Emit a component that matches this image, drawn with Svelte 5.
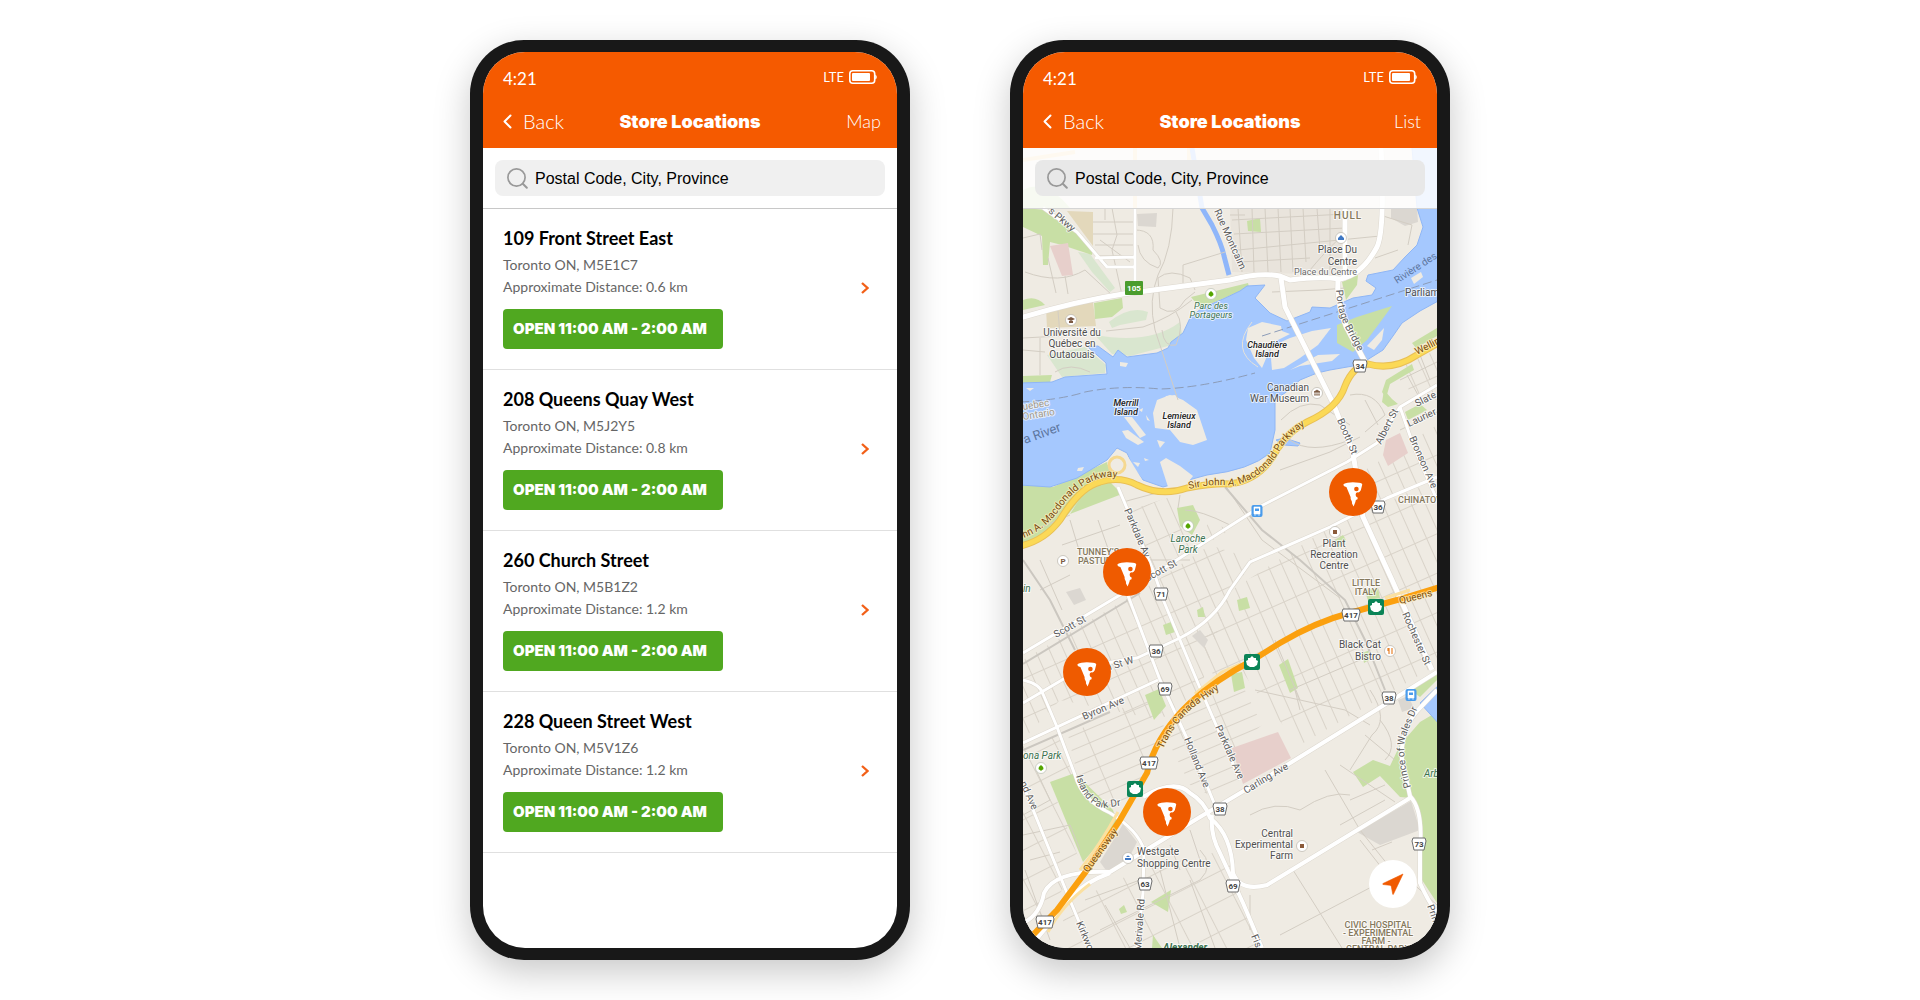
<script>
  const stores = [
    { name: '109 Front Street East', area: 'Toronto ON, M5E1C7', distance: '0.6 km' },
    { name: '208 Queens Quay West', area: 'Toronto ON, M5J2Y5', distance: '0.8 km' },
    { name: '260 Church Street', area: 'Toronto ON, M5B1Z2', distance: '1.2 km' },
    { name: '228 Queen Street West', area: 'Toronto ON, M5V1Z6', distance: '1.2 km' }
  ];
  const hours = 'OPEN 11:00 AM - 2:00 AM';

  // Map drawing units: the visible window is 414 x 800, starting at (1023, 148).
  const view = { x: 1023, y: 148, w: 414, h: 800 };
  const left = (x) => `${((x - view.x) / view.w) * 100}%`;
  const top = (y) => `${((y - view.y) / view.h) * 100}%`;

  const pins = [
    { x: 1353, y: 492, name: '109 Front Street East' },
    { x: 1127, y: 572, name: '208 Queens Quay West' },
    { x: 1087, y: 672, name: '260 Church Street' },
    { x: 1167, y: 812, name: '228 Queen Street West' }
  ];

  const greens = [
    'M1023 208L1047 210L1070 223L1093 250L1092 255L1062 245L1050 242L1048 265L1043 265L1042 236L1023 227Z',
    'M1023 300Q1036 295 1045 305L1023 310Z',
    'M1094 303L1122 298L1123 308L1112 317L1095 319Z',
    'M1023 376L1052 375L1050 382L1023 383Z',
    'M1191 297L1248 283L1250 291L1238 292L1222 299L1200 308Z',
    'M1342 282L1358 275L1357 285L1346 300Z',
    'M1247 221L1260 218L1261 232L1248 231Z',
    'M1023 485L1053 487L1107 462L1120 480L1085 493L1060 525L1023 546Z',
    'M1070 514L1084 492L1110 482L1122 494Z',
    'M1177 508L1193 505L1200 520L1192 535L1180 526Z',
    'M1384 390L1392 399L1398 404L1388 407L1382 402Z',
    'M1405 412L1420 404L1427 410L1408 420Z',
    'M1386 380L1412 364L1414 370L1390 384L1386 398L1382 392Z',
    'M1412 343L1437 328L1437 336L1416 348Z',
    'M1163 625L1171 622L1175 632L1166 635Z',
    'M1197 610L1203 607L1205 617L1198 617Z',
    'M1145 695L1159 689L1166 706L1154 720Z',
    'M1237 600L1247 597L1250 608L1239 611Z',
    'M1231 674L1242 672L1245 688L1234 692Z',
    'M1279 665L1288 659L1298 688L1290 693Z',
    'M1050 782L1075 773L1113 810L1117 823L1083 862Z',
    'M1151 902L1171 890L1168 912Z',
    'M1119 909L1124 905L1127 912L1121 914Z',
    'M1153 935L1162 948L1152 948Z',
    'M1335 540L1343 535L1346 540L1338 549Z',
    'M1362 653L1370 650L1369 660L1364 663Z',
    'M1365 590L1378 588L1380 598L1368 600Z',
    'M1410 690L1437 672L1437 680L1420 697Z',
    'M1353 772L1373 760L1390 766L1400 745L1420 722L1437 712L1437 903L1422 880L1421 815L1411 798L1400 797L1380 776L1363 787Z'
  ];
  const paleGreens = [
    'M1078 252L1090 254L1115 288L1110 292L1092 272Z',
    'M1109 322Q1130 305 1148 312L1146 320L1120 325L1112 328Z',
    'M1095 335Q1150 345 1180 322L1182 334L1168 346L1130 356L1112 354Z',
    'M1047 355L1085 347L1106 365L1105 373L1062 377Z'
  ];
  const pinks = [
    'M1050 246L1068 243L1073 275L1062 276Z',
    'M1383 455L1386 440L1400 433L1408 453L1388 466Z',
    'M1232 748L1278 732L1291 758L1243 784Z'
  ];
  const tans = [
    'M1046 308L1093 302L1096 326L1047 328Z',
    'M1067 211L1093 212L1093 246L1084 234Z'
  ];
  const greys = [
    'M1123 824L1137 842L1127 862L1108 873L1100 862Z',
    'M1357 832L1411 801L1420 830L1380 845Z',
    'M1137 214L1157 213L1156 227L1138 226Z',
    'M1391 208L1417 208L1418 222L1405 226L1391 218Z',
    'M1192 636L1200 630L1208 640L1204 648Z',
    'M1066 592L1080 588L1086 600L1074 605Z',
    'M1398 700L1408 696L1414 708L1402 712Z'
  ];
  const islands = [
    'M1153 413L1157 400L1170 395L1183 400L1197 410L1207 440L1193 445L1180 442L1170 430L1155 428Z',
    'M1160 462L1166 458L1180 466L1193 476L1186 485L1168 487Z',
    'M1248 328L1262 322L1281 326L1282 331L1290 334L1274 342L1270 349L1262 368L1254 358L1246 340Z',
    'M1270 347L1290 338L1312 331L1331 328L1318 345L1300 358L1284 368L1272 370Z',
    'M1290 370L1318 355L1340 354L1332 361L1300 366L1280 374Z',
    'M1367 346L1384 328L1382 340L1374 350Z',
    'M1411 278L1421 272L1423 277L1414 284Z',
    'M1124 417L1132 417L1146 435L1140 438Z',
    'M1122 431L1128 430L1144 442L1138 445L1126 438Z',
    'M1157 440L1165 442L1160 448Z',
    'M1120 362L1128 363L1126 367L1120 366Z',
    'M1166 396L1175 395L1179 399L1164 400Z',
    'M1078 468L1084 467L1082 471L1077 471Z',
    'M1026 388L1034 388L1030 391Z',
    'M1133 462L1140 463L1138 467Z',
    'M1139 410L1143 408L1142 412ZM1146 415L1150 421L1147 420ZM1144 458L1149 460L1145 461Z'
  ];
  const minor = [
    'M1093 222H1135M1093 234H1135M1095 245H1135M1100 256H1135M1112 208L1117 235L1112 250L1122 295M1105 208V220',
    'M1135 230Q1155 230 1153 250Q1165 262 1158 268Q1140 262 1138 245',
    'M1173 208Q1172 250 1158 275Q1148 300 1155 330L1178 400',
    'M1158 278Q1170 268 1190 278L1195 290M1158 278L1160 308Q1175 318 1185 300L1195 292M1183 283V265L1225 252',
    'M1106 331L1143 327Q1170 318 1192 300M1162 330Q1164 348 1176 345Q1185 325 1176 312',
    'M1025 272Q1060 285 1085 270L1113 296M1048 258L1056 293M1065 276L1068 294M1023 238L1040 234L1042 250M1100 240L1130 262',
    'M1023 338L1060 336M1058 311L1060 335M1023 350L1045 352M1040 338V375M1055 372Q1070 362 1090 372',
    'M1238 208L1242 272M1252 208L1254 272M1265 208L1268 272M1278 208L1281 272M1290 208L1293 272M1303 208L1306 262M1317 208L1320 250M1330 208V270',
    'M1232 220L1345 214M1234 234L1345 228M1238 250L1380 236M1240 262L1310 258M1310 270Q1335 240 1345 235',
    'M1380 215L1412 225L1408 245M1375 258L1398 250M1272 292L1320 290L1345 288M1230 215L1245 215',
    'M1280 470L1330 452L1360 437M1225 485L1262 540L1340 598M1281 420Q1300 400 1320 405L1350 425M1290 440Q1310 455 1350 440',
    'M1350 395Q1375 390 1385 415L1365 432M1365 400L1378 425M1400 430L1437 412M1400 380L1437 362M1420 355L1430 380M1407 375L1418 395',
    'M1070 515L1023 535M1123 502L1160 492M1145 560L1190 560M1180 495L1178 508M1185 510Q1200 510 1230 525',
    'M1070 520L1082 560M1040 560L1062 610M1098 520L1112 560M1062 545L1120 525M1040 590L1070 575',
    'M1255 690L1345 710L1370 725M1295 690L1300 710M1290 690L1360 660M1275 640L1300 700',
    'M1250 815Q1275 800 1300 810Q1330 790 1350 795M1293 870L1342 948M1250 895L1250 930M1280 935L1400 872L1437 905',
    'M1340 765L1395 802M1325 770L1360 830L1400 880M1350 800L1385 785M1340 825L1385 800M1380 720Q1400 745 1385 760',
    'M1370 690Q1390 720 1372 735L1350 770M1365 735L1395 760M1360 840L1385 872M1372 850L1392 842',
    'M1023 835L1070 825L1080 850M1030 860L1060 852M1085 900L1140 880M1100 930L1200 880Q1215 865 1200 850M1105 905L1130 948M1160 870L1180 948M1190 880L1215 948',
    'M1025 870L1050 940M1036 770L1050 800L1023 815M1190 830L1200 860M1170 845L1180 870'
  ];
  const white = [
    'M1020 318Q1077 301 1123 294L1230 280Q1260 272 1280 276L1290 280Q1320 276 1340 279Q1362 275 1377 247Q1385 230 1381 148',
    'M1281 278L1285 307L1303 343L1333 403L1353 453L1363 517L1392 580L1432 670',
    'M1338 278Q1336 300 1346 326L1365 362',
    'M1345 278V208'
  ];
  const whiteThin = [
    'M1043 208L1077 232L1107 267H1135M1095 258L1135 257M1135 208V290',
    'M1118 487L1153 570L1160 590',
    'M1023 653L1150 577L1263 505L1347 462L1377 443L1400 407L1437 385',
    'M1023 703L1067 677Q1090 664 1137 658L1180 638Q1215 620 1230 590L1250 562L1330 527L1387 498L1437 477',
    'M1023 743L1158 680M1400 407L1415 450L1437 500',
    'M1023 680Q1040 684 1043 694L1057 727L1075 775Q1082 800 1110 813Q1138 830 1144 850L1143 893L1137 950',
    'M1127 593L1160 680L1190 745L1217 810M1162 597L1200 688L1240 780',
    'M1023 785L1067 893L1090 948'
  ];
  const whiteWide = [
    'M1023 923Q1040 915 1044 893Q1055 870 1110 872L1200 817L1287 765L1389 702L1437 672',
    'M1036 940L1070 898Q1085 882 1110 873M1143 797Q1175 778 1190 793Q1205 802 1210 818Q1232 835 1233 873Q1240 892 1267 885L1410 798',
    'M1212 815Q1210 835 1220 853L1243 903L1262 948',
    'M1437 690L1418 710Q1400 730 1402 760L1410 796Q1423 810 1420 847V883Q1430 905 1437 912'
  ];
  const parkway =
    'M1020 546Q1044 541 1060 520Q1080 487 1100 482Q1120 476 1137 485Q1162 497 1187 488Q1215 483 1230 484Q1262 480 1278 448Q1290 430 1307 422Q1338 408 1345 386Q1353 366 1368 364Q1393 371 1417 355L1440 342';
  const highway =
    'M1030 938L1057 910L1087 870L1120 820L1147 773Q1156 735 1190 703Q1215 680 1253 660L1280 643Q1315 622 1353 612L1397 600L1440 587';

  // Point labels. a: anchor, r: rotation in degrees.
  const labels = [
    { x: 1072, y: 336, t: 'Université du', c: 'poi', a: 'middle' },
    { x: 1072, y: 347, t: 'Québec en', c: 'poi', a: 'middle' },
    { x: 1072, y: 358, t: 'Outaouais', c: 'poi', a: 'middle' },
    { x: 1348, y: 219, t: 'HULL', c: 'town', a: 'middle' },
    { x: 1357, y: 253, t: 'Place Du', c: 'poi', a: 'end' },
    { x: 1357, y: 265, t: 'Centre', c: 'poi', a: 'end' },
    { x: 1357, y: 275, t: 'Place du Centre', c: 'small', a: 'end' },
    { x: 1267, y: 348, t: 'Chaudière', c: 'isle', a: 'middle' },
    { x: 1267, y: 357, t: 'Island', c: 'isle', a: 'middle' },
    { x: 1126, y: 406, t: 'Merrill', c: 'isle', a: 'middle' },
    { x: 1126, y: 415, t: 'Island', c: 'isle', a: 'middle' },
    { x: 1179, y: 419, t: 'Lemieux', c: 'isle', a: 'middle' },
    { x: 1179, y: 428, t: 'Island', c: 'isle', a: 'middle' },
    { x: 1211, y: 309, t: 'Parc des', c: 'park small-park', a: 'middle' },
    { x: 1211, y: 318, t: 'Portageurs', c: 'park small-park', a: 'middle' },
    { x: 1309, y: 391, t: 'Canadian', c: 'poi', a: 'end' },
    { x: 1309, y: 402, t: 'War Museum', c: 'poi', a: 'end' },
    { x: 1397, y: 284, t: 'Rivière des', c: 'river', r: -33 },
    { x: 1405, y: 296, t: 'Parliam', c: 'poi' },
    { x: 1214, y: 211, t: 'Rue Montcalm', c: 'street', r: 66 },
    { x: 1048, y: 212, t: 's Pkwy', c: 'street', r: 40 },
    { x: 1417, y: 355, t: 'Wellin', c: 'route', r: -27 },
    { x: 1417, y: 407, t: 'Slate', c: 'street', r: -27 },
    { x: 1409, y: 427, t: 'Laurier', c: 'street', r: -25 },
    { x: 1381, y: 445, t: 'Albert St', c: 'street', r: -63 },
    { x: 1409, y: 438, t: 'Bronson Ave', c: 'street', r: 66 },
    { x: 1337, y: 420, t: 'Booth St', c: 'street', r: 67 },
    { x: 1023, y: 410, t: 'uebec', c: 'border', r: -9 },
    { x: 1023, y: 420, t: 'Ontario', c: 'border', r: -9 },
    { x: 1025, y: 444, t: 'a River', c: 'river big', r: -20 },
    { x: 1188, y: 542, t: 'Laroche', c: 'park', a: 'middle' },
    { x: 1188, y: 553, t: 'Park', c: 'park', a: 'middle' },
    { x: 1124, y: 510, t: 'Parkdale Av', c: 'street', r: 67 },
    { x: 1077, y: 555, t: 'TUNNEY’S', c: 'area' },
    { x: 1078, y: 564, t: 'PASTURE', c: 'area' },
    { x: 1023, y: 592, t: 'in', c: 'park' },
    { x: 1147, y: 582, t: 'Scott St', c: 'street', r: -29 },
    { x: 1056, y: 638, t: 'Scott St', c: 'street', r: -29 },
    { x: 1107, y: 671, t: 'n St W', c: 'street', r: -17 },
    { x: 1084, y: 720, t: 'Byron Ave', c: 'street', r: -23 },
    { x: 1023, y: 759, t: 'ona Park', c: 'park' },
    { x: 1184, y: 739, t: 'Holland Ave', c: 'street', r: 68 },
    { x: 1215, y: 727, t: 'Parkdale Ave', c: 'street', r: 66 },
    { x: 1400, y: 604, t: 'Queens', c: 'route', r: -14 },
    { x: 1366, y: 586, t: 'LITTLE', c: 'area', a: 'middle' },
    { x: 1366, y: 595, t: 'ITALY', c: 'area', a: 'middle' },
    { x: 1402, y: 614, t: 'Rochester St', c: 'street', r: 66 },
    { x: 1381, y: 648, t: 'Black Cat', c: 'poi', a: 'end' },
    { x: 1381, y: 660, t: 'Bistro', c: 'poi', a: 'end' },
    { x: 1398, y: 503, t: 'CHINATOWN', c: 'area' },
    { x: 1334, y: 547, t: 'Plant', c: 'poi', a: 'middle' },
    { x: 1334, y: 558, t: 'Recreation', c: 'poi', a: 'middle' },
    { x: 1334, y: 569, t: 'Centre', c: 'poi', a: 'middle' },
    { x: 1246, y: 794, t: 'Carling Ave', c: 'street', r: -31 },
    { x: 1293, y: 837, t: 'Central', c: 'poi', a: 'end' },
    { x: 1293, y: 848, t: 'Experimental', c: 'poi', a: 'end' },
    { x: 1293, y: 859, t: 'Farm', c: 'poi', a: 'end' },
    { x: 1137, y: 855, t: 'Westgate', c: 'poi' },
    { x: 1137, y: 867, t: 'Shopping Centre', c: 'poi' },
    { x: 1088, y: 873, t: 'Queensway', c: 'route', r: -54 },
    { x: 1020, y: 783, t: 'nd Ave', c: 'street', r: 66 },
    { x: 1076, y: 923, t: 'Kirkwo', c: 'street', r: 67 },
    { x: 1141, y: 951, t: 'Merivale Rd', c: 'street', r: -86 },
    { x: 1163, y: 951, t: 'Alexander', c: 'park strong' },
    { x: 1251, y: 936, t: 'Fis', c: 'street', r: 68 },
    { x: 1378, y: 928, t: 'CIVIC HOSPITAL', c: 'area', a: 'middle' },
    { x: 1378, y: 936, t: '- EXPERIMENTAL', c: 'area', a: 'middle' },
    { x: 1376, y: 944, t: 'FARM -', c: 'area', a: 'middle' },
    { x: 1378, y: 952, t: 'CENTRAL PARK', c: 'area', a: 'middle' },
    { x: 1424, y: 777, t: 'Arb', c: 'park' },
    { x: 1427, y: 906, t: 'Prin', c: 'street', r: 70 }
  ];

  const curved = [
    { id: 'pw-east', c: 'route', t: 'Sir John A. Macdonald Parkway', d: 'M1189 489Q1215 483 1233 486Q1264 478 1279 452Q1290 432 1312 422' },
    { id: 'pw-west', c: 'route', t: 'hn A. Macdonald Parkway', d: 'M1024 538Q1044 530 1058 512Q1075 487 1095 480Q1110 474 1125 480' },
    { id: 'portage', c: 'street', t: 'Portage Bridge', d: 'M1336 290Q1337 310 1345 327L1366 366' },
    { id: 'canada', c: 'route', t: 'Trans-Canada Hwy', d: 'M1163 749Q1175 722 1195 706L1236 678' },
    { id: 'island', c: 'street', t: 'Island Park Dr', d: 'M1076 776Q1084 805 1104 808L1130 804' },
    { id: 'wales', c: 'street', t: 'Prince of Wales Dr', d: 'M1411 787Q1402 760 1405 738L1421 700' }
  ];

  const shields = [
    { x: 1360, y: 366, t: '34' }, { x: 1378, y: 507, t: '36' }, { x: 1161, y: 594, t: '71' },
    { x: 1156, y: 651, t: '36' }, { x: 1165, y: 689, t: '69' }, { x: 1149, y: 763, t: '417' },
    { x: 1351, y: 615, t: '417' }, { x: 1389, y: 698, t: '38' }, { x: 1220, y: 809, t: '38' },
    { x: 1145, y: 884, t: '63' }, { x: 1233, y: 886, t: '69' }, { x: 1045, y: 922, t: '417' },
    { x: 1419, y: 844, t: '73' }
  ];
  const maples = [{ x: 1376, y: 607 }, { x: 1252, y: 662 }, { x: 1135, y: 789 }];
  const transit = [{ x: 1257, y: 511 }, { x: 1411, y: 695 }];
  const trees = [{ x: 1211, y: 294 }, { x: 1188, y: 526 }, { x: 1041, y: 768 }];
  const dots = [{ x: 1335, y: 532 }, { x: 1302, y: 846 }];
</script>

{#snippet header(action)}
  <header>
    <div class="status">
      <span class="clock">4:21</span>
      <span class="signal">
        LTE
        <svg width="28" height="14" viewBox="0 0 28 14" aria-label="Battery">
          <rect x="0.8" y="0.8" width="24.9" height="12.4" rx="3" fill="none" stroke="#fff" stroke-width="1.6" />
          <rect x="3" y="3" width="18" height="8" rx="1" fill="#fff" />
          <path d="M26.2 4.5Q28 5.5 27.8 7Q28 8.500 26.200 9.500Z" fill="#fff" />
        </svg>
      </span>
    </div>
    <nav>
      <button class="back" type="button">
        <svg width="9" height="15" viewBox="0 0 9 15" aria-hidden="true">
          <path d="M7.500 1.500L1.500 7.500L7.500 13.500" fill="none" stroke="#fff" stroke-width="2" stroke-linecap="round" stroke-linejoin="round" />
        </svg>
        Back
      </button>
      <h1>Store Locations</h1>
      <button class="action" type="button">{action}</button>
    </nav>
  </header>
{/snippet}

{#snippet search(id, extra)}
  <div class="search {extra}">
    <label for={id}>
      <svg width="21" height="21" viewBox="0 0 21 21" aria-label="Search">
        <circle cx="9.500" cy="9.500" r="8.600" fill="none" stroke="#999" stroke-width="1.700" />
        <path d="M15.800 15.800L19.800 19.800" stroke="#999" stroke-width="2" stroke-linecap="round" />
      </svg>
    </label>
    <input {id} type="text" placeholder="Postal Code, City, Province" />
  </div>
{/snippet}

<main>
  <section class="phone">
    <div class="screen">
      {@render header('Map')}
      {@render search('search-list', '')}
      <ul>
        {#each stores as store}
          <li>
            <div class="info">
              <h2>{store.name}</h2>
              <p>{store.area}</p>
              <p>Approximate Distance: {store.distance}</p>
              <span class="hours">{hours}</span>
            </div>
            <button class="more" type="button" aria-label="Open {store.name}">
              <svg width="8" height="12" viewBox="0 0 8 12" aria-hidden="true">
                <path d="M1 1L6.500 6L1 11" fill="none" stroke="#f26018" stroke-width="2.300" />
              </svg>
            </button>
          </li>
        {/each}
      </ul>
    </div>
  </section>

  <section class="phone">
    <div class="screen">
      {@render header('List')}
      <div class="map">
        <svg class="canvas" viewBox="{view.x} {view.y} {view.w} {view.h}" preserveAspectRatio="xMidYMin slice" aria-label="Map">
          <defs>
            <pattern id="blocks" width="13" height="36" patternUnits="userSpaceOnUse" patternTransform="translate(1023 560) rotate(-24)">
              <path d="M0 0H13M0 0V36" class="block" />
            </pattern>
            <pattern id="blocks-wide" width="44" height="13" patternUnits="userSpaceOnUse" patternTransform="translate(1023 700) rotate(-23)">
              <path d="M0 0H44M0 0V13" class="block" />
            </pattern>
            <pattern id="blocks-open" width="30" height="27" patternUnits="userSpaceOnUse" patternTransform="translate(1023 880) rotate(-27)">
              <path d="M0 0H30M0 0V27" class="block" />
            </pattern>
          </defs>

          <rect x={view.x} y={view.y} width={view.w} height={view.h} fill="#efebe3" />
          <path d="M1230 208H1345V275L1232 272Z" fill="#e9e4dc" />
          <path d="M1023 160L1075 152M1040 175H1090M1135 148V208M1189 148V160" stroke="#f8d79a" stroke-width="4" fill="none" />
          <path d="M1023 190Q1045 178 1070 208H1023Z" fill="#c8dfa5" />

          <path fill="url(#blocks)" d="M1023 660L1150 585L1210 545L1255 560L1232 590L1215 640L1200 690L1160 720L1060 700L1023 740Z" />
          <path fill="url(#blocks)" d="M1232 590L1330 527L1437 480V665L1300 745L1262 700L1240 668L1215 680L1200 640Z" />
          <path fill="url(#blocks)" d="M1130 510L1170 497L1178 512L1182 530L1195 538L1210 522L1230 530L1153 575ZM1365 470L1437 425V480L1375 505ZM1405 365L1437 350V400L1410 400Z" />
          <path fill="url(#blocks-wide)" d="M1068 735L1158 690L1165 735L1142 795L1110 808L1082 795ZM1165 735L1195 705L1240 680L1262 725L1232 750L1245 780L1215 798L1190 785Z" />
          <path fill="url(#blocks-open)" d="M1023 745L1060 735L1082 795L1050 782L1080 862L1040 925L1023 930ZM1065 905L1140 870L1225 850L1262 948H1060Z" />

          <g fill="#d9e6cf">{#each paleGreens as d}<path {d} />{/each}</g>
          <g fill="#e3d8bb">{#each tans as d}<path {d} />{/each}</g>
          <g fill="#c8dfa5">{#each greens as d}<path {d} />{/each}</g>
          <g fill="#e7cfcb">{#each pinks as d}<path {d} />{/each}</g>
          <g fill="#dbd7d1">{#each greys as d}<path {d} />{/each}</g>

          <path
            class="water"
            d="M1020 383L1052 382L1065 377L1107 374L1106 363L1088 347L1098 346L1113 357L1118 350L1127 357L1157 353L1168 348L1171 342L1183 333L1190 318L1202 308L1223 299L1240 291L1247 286L1265 285L1255 298L1270 313L1287 321L1310 312L1312 307L1330 308L1353 298L1372 295L1376 288L1366 281L1368 275L1393 270L1405 257L1417 245L1423 227L1417 208L1412 148H1440V300L1420 311L1402 323L1393 336L1383 350L1367 360L1353 366L1330 370L1317 373L1300 380L1285 393L1275 399V430L1270 453Q1250 470 1207 475L1163 487L1143 480L1133 467L1127 453L1117 448L1107 460L1077 478L1050 487L1020 485Z"
          />
          <path class="stream" d="M1192 148L1202 208L1212 225Q1222 245 1224 256L1229 275" />
          <path class="water" d="M1276 440L1284 438L1300 443L1298 446L1284 445ZM1420 703L1440 684V725Z" />
          <g class="island">{#each islands as d}<path {d} />{/each}</g>
          <path class="island" d="M1107 464L1117 449L1127 455L1143 481L1120 478Z" />
          <path fill="#c8dfa5" d="M1337 325L1357 317L1392 306L1384 317L1367 340L1353 352L1337 343Z" />
          <path d="M1252 322Q1230 350 1258 367" fill="none" stroke="#e5e2da" />
          <path class="frontier" d="M1020 402Q1060 400 1085 392Q1120 385 1160 389Q1200 388 1255 373M1262 336L1437 280" />

          <g class="minor">{#each minor as d}<path {d} />{/each}</g>
          <path class="rail" d="M1023 664L1140 593M1023 560L1050 600L1075 650M1023 750L1110 712M1225 487L1262 530L1300 560L1345 600L1365 640L1385 690" />

          <g class="case">{#each whiteThin as d}<path {d} stroke-width="4" />{/each}{#each white as d}<path {d} stroke-width="6" />{/each}{#each whiteWide as d}<path {d} stroke-width="5" />{/each}</g>
          <g class="road">{#each whiteThin as d}<path {d} stroke-width="3" />{/each}{#each white as d}<path {d} stroke-width="5" />{/each}{#each whiteWide as d}<path {d} stroke-width="4" />{/each}</g>

          <circle cx="1117" cy="465" r="8" fill="none" stroke="#f5d890" stroke-width="3" />
          <path d={parkway} fill="none" stroke="#e9c055" stroke-width="7" />
          <path d={parkway} fill="none" stroke="#fbd957" stroke-width="5" />
          <path d="M1048 932Q1062 905 1090 884M1080 870Q1100 845 1118 812M1195 694L1222 672L1240 664M1385 598L1410 590" fill="none" stroke="#fbe0a0" stroke-width="3" />
          <path d={highway} fill="none" stroke="#fba00f" stroke-width="6" />

          {#each curved as road}
            <path id={road.id} d={road.d} fill="none" />
            <text class={road.c}><textPath href="#{road.id}">{road.t}</textPath></text>
          {/each}
          {#each labels as l}
            <text class={l.c} text-anchor={l.a ?? 'start'} transform="translate({l.x} {l.y}) rotate({l.r ?? 0})">{l.t}</text>
          {/each}

          <rect x="1125" y="281" width="18" height="14" rx="1" fill="#4a9c2d" />
          <text class="shield-green" x="1134" y="291" text-anchor="middle">105</text>

          {#each shields as s}
            <g transform="translate({s.x} {s.y})">
              <path d={s.t.length > 2 ? 'M-8 -6H8L9 -3L7 6H-7L-9 -3Z' : 'M-6 -6H6L7 -3L5 6H-5L-7 -3Z'} fill="#fff" stroke="#6d6d6d" />
              <text class="shield" y="3" text-anchor="middle">{s.t}</text>
            </g>
          {/each}
          {#each maples as m}
            <g transform="translate({m.x} {m.y})">
              <rect x="-8" y="-8" width="16" height="16" rx="2" fill="#0b8457" />
              <path d="M0 -6L2 -4L4 -4L4 -2L6 -1L5 3L2 5H-2L-5 3L-6 -1L-4 -2L-4 -4L-2 -4Z" fill="#fff" />
            </g>
          {/each}
          {#each transit as b}
            <g transform="translate({b.x} {b.y})">
              <rect x="-5.500" y="-6" width="11" height="12" rx="2" fill="#4a9cec" />
              <path d="M-3 -4H3V3H-3ZM-3 4H-1M1 4H3" fill="#fff" stroke="#fff" stroke-width="0.600" />
              <path d="M-2 -2.500H2V0H-2Z" fill="#4a9cec" />
            </g>
          {/each}
          {#each trees as t}
            <g transform="translate({t.x} {t.y})">
              <circle r="5.500" fill="#fff" stroke="#b9bfb0" stroke-width="0.700" />
              <path d="M0 -3Q3 -1 2.500 1Q2 2 0.500 2V3H-0.500V2Q-2 2 -2.500 1Q-3 -1 0 -3Z" fill="#54a500" />
            </g>
          {/each}
          {#each dots as d}
            <g transform="translate({d.x} {d.y})">
              <circle r="5.500" fill="#fff" stroke="#b9b4aa" stroke-width="0.700" />
              <rect x="-2" y="-2" width="4" height="4" fill="#8a5a3a" />
            </g>
          {/each}
          <g stroke="#b9b4aa" stroke-width="0.700" fill="#fff">
            <circle cx="1071" cy="320" r="5.500" />
            <circle cx="1341" cy="238" r="5.500" />
            <circle cx="1317" cy="393" r="5.500" />
            <circle cx="1063" cy="561" r="5.500" />
            <circle cx="1390" cy="651" r="5.500" />
            <circle cx="1128" cy="858" r="5.500" />
          </g>
          <path d="M1067 319L1071 317L1075 319L1071 321ZM1069 321H1073V323H1069Z" fill="#7c5a43" />
          <path d="M1338 240V238L1341 235L1344 238V240ZM1125 860V858H1131V860ZM1126 857Q1128 854 1130 857Z" fill="#3f78c4" />
          <path d="M1314 392L1317 390L1320 392ZM1314 395H1320M1315 392V395M1317 392V395M1319 392V395" fill="#7c5a43" stroke="#7c5a43" stroke-width="0.800" />
          <path d="M1388 648V651M1389 648V654M1392 648V654" stroke="#e8842c" stroke-width="1.200" />
          <text class="parking" x="1063" y="564" text-anchor="middle">P</text>
        </svg>

        {@render search('search-map', 'over')}

        {#each pins as pin}
          <button class="pin" type="button" aria-label={pin.name} style="left: {left(pin.x)}; top: {top(pin.y)}">
            <svg width="48" height="48" viewBox="0 0 48 48" aria-hidden="true">
              <path
                d="M14.200 16.800Q15 15.300 18.500 14.700Q24 13.800 30 14.800Q33.600 15.300 33.200 16.800L31.800 22.300Q30.500 25 28.500 24.300Q26.500 24.500 26.600 27Q27 29.300 28.600 29.500Q29 32 27.500 31.600Q26.600 31.700 26.400 34L24.600 38.500L23 35.500Q23.200 33.500 22.400 32.500Q21.400 31.500 21.600 29L17.400 18.900Q14.800 19 14.200 16.800Z"
                fill="#fff"
              />
              <circle cx="27.400" cy="21" r="2.300" fill="#ef5b00" />
            </svg>
          </button>
        {/each}

        <button class="locate" type="button" aria-label="My location" style="left: {left(1393)}; top: {top(884)}">
          <svg width="22" height="22" viewBox="0 0 22 22" aria-hidden="true">
            <path d="M21 1L11.500 21Q11 22 10.700 21L9.300 13.500Q9 12.500 8 12.300L1 11.500Q0 11 1 10.500Z" fill="#f05a00" stroke="#f05a00" stroke-width="0.600" stroke-linejoin="round" />
          </svg>
        </button>
      </div>
    </div>
  </section>
</main>

<style>
  :global(body) {
    background: #fff;
  }

  * {
    box-sizing: border-box;
    margin: 0;
  }

  main {
    display: flex;
    flex-wrap: wrap;
    justify-content: center;
    gap: 40px 100px;
    padding: 40px 20px;
    font-family: Lato, sans-serif;
    color: #000;
  }

  .phone {
    display: flex;
    flex: 0 1 440px;
    aspect-ratio: 440 / 920;
    padding: 12px 13px;
    border-radius: 54px;
    background: #181818;
    box-shadow: 0 12px 36px rgba(0, 0, 0, 0.22);
  }

  .screen {
    display: flex;
    flex: 1;
    flex-direction: column;
    overflow: hidden;
    border-radius: 42px;
    background: #fff;
  }

  button {
    padding: 0;
    border: 0;
    background: none;
    color: inherit;
    font: inherit;
    cursor: pointer;
  }

  header {
    padding: 0 16px 8px;
    background: #f55a00;
    color: #fff;
  }

  .status {
    display: flex;
    align-items: center;
    justify-content: space-between;
    height: 50px;
    padding: 0 4px;
  }

  .clock {
    padding-top: 2px;
    font-size: 17px;
  }

  .signal {
    display: flex;
    align-items: center;
    gap: 5px;
    font-size: 13px;
  }

  nav {
    display: grid;
    grid-template-columns: 1fr auto 1fr;
    align-items: center;
    height: 38px;
  }

  .back {
    display: flex;
    align-items: center;
    gap: 11px;
    padding-left: 4px;
    font-size: 20px;
    font-weight: 300;
  }

  h1 {
    font-family: Inter, sans-serif;
    font-size: 18px;
    font-weight: 900;
  }

  .action {
    justify-self: end;
    font-size: 18px;
    font-weight: 300;
  }

  .search {
    position: relative;
    display: flex;
    padding: 12px;
    border-bottom: 1px solid #c8c8c8;
  }

  .search label {
    position: absolute;
    left: 24px;
    top: 20px;
    height: 21px;
  }

  .search label svg {
    display: block;
  }

  input {
    flex: 1;
    min-width: 0;
    height: 36px;
    padding: 2px 12px 0 40px;
    border: 0;
    border-radius: 8px;
    background: #f0f0f0;
    font: 16px 'Liberation Sans', sans-serif;
    color: #000;
  }

  input::placeholder {
    color: #000;
    opacity: 1;
  }

  .over {
    border-color: #d5d5d5;
    background: rgba(255, 255, 255, 0.85);
  }

  .over input {
    background: #e8e8e8;
  }

  ul {
    padding: 0;
    list-style: none;
  }

  li {
    display: flex;
    align-items: center;
    justify-content: space-between;
    padding: 18px 28px 20px 20px;
    border-bottom: 1px solid #e0e0e0;
  }

  h2 {
    margin-bottom: 5px;
    font-size: 18px;
    font-weight: 700;
    line-height: 22px;
  }

  p {
    color: #666;
    font-size: 14px;
    line-height: 22px;
  }

  .hours {
    display: block;
    width: 220px;
    margin-top: 11px;
    padding: 0 10px;
    border-radius: 4px;
    background: #50a820;
    color: #fff;
    font-family: Inter, sans-serif;
    font-size: 15px;
    font-weight: 900;
    line-height: 40px;
    white-space: nowrap;
  }

  .more svg {
    display: block;
  }

  .map {
    position: relative;
    flex: 1;
    overflow: hidden;
  }

  .canvas {
    position: absolute;
    inset: 0;
    width: 100%;
    height: 100%;
  }

  .pin,
  .locate {
    position: absolute;
    display: grid;
    place-items: center;
    width: 48px;
    height: 48px;
    margin: -24px 0 0 -24px;
    border-radius: 50%;
    background: #ef5b00;
  }

  .locate {
    background: #fff;
  }

  .block {
    fill: none;
    stroke: #d9d3c9;
    stroke-width: 2;
  }

  .water {
    fill: #a5c8fe;
    stroke: #8fb6f5;
  }

  .stream {
    fill: none;
    stroke: #8fb6fa;
    stroke-width: 5;
  }

  .island {
    fill: #efebe3;
  }

  .frontier {
    fill: none;
    stroke: #8c9cb8;
    stroke-dasharray: 9 4;
  }

  .minor {
    fill: none;
    stroke: #d3cdc3;
    stroke-width: 1;
  }

  .rail {
    fill: none;
    stroke: #cbc7c0;
    stroke-width: 2;
  }

  .case,
  .road {
    fill: none;
    stroke-linejoin: round;
  }

  .case {
    stroke: #ddd8cf;
  }

  .road {
    stroke: #fff;
  }

  text {
    font-family: Roboto, sans-serif;
    font-size: 10px;
    paint-order: stroke;
    stroke: rgba(255, 255, 255, 0.7);
    stroke-width: 2px;
    stroke-linejoin: round;
    fill: #505050;
  }

  .small {
    font-size: 9px;
    fill: #6b6b6b;
  }

  .street {
    fill: #5c5c5c;
  }

  .isle {
    font-size: 9px;
    font-style: italic;
    font-weight: 500;
    fill: #202020;
  }

  .park {
    font-style: italic;
    fill: #3c7350;
  }

  .strong {
    font-weight: 700;
  }

  .small-park {
    font-size: 9px;
  }

  .river {
    stroke: none;
    fill: #5d769f;
  }

  .big {
    font-size: 13px;
  }

  .border {
    fill: #a39a8a;
  }

  .route {
    stroke: rgba(255, 240, 190, 0.7);
    fill: #7a4d10;
  }

  .town,
  .area {
    font-weight: 500;
    fill: #85795c;
  }

  .town {
    letter-spacing: 1px;
  }

  .area {
    font-size: 9px;
  }

  .shield {
    stroke: none;
    font-size: 8px;
    font-weight: 700;
    fill: #444;
  }

  .shield-green {
    stroke: none;
    font-size: 8px;
    font-weight: 700;
    fill: #fff;
  }

  .parking {
    stroke: none;
    font-size: 8px;
    font-weight: 700;
    fill: #7c5a43;
  }
</style>
